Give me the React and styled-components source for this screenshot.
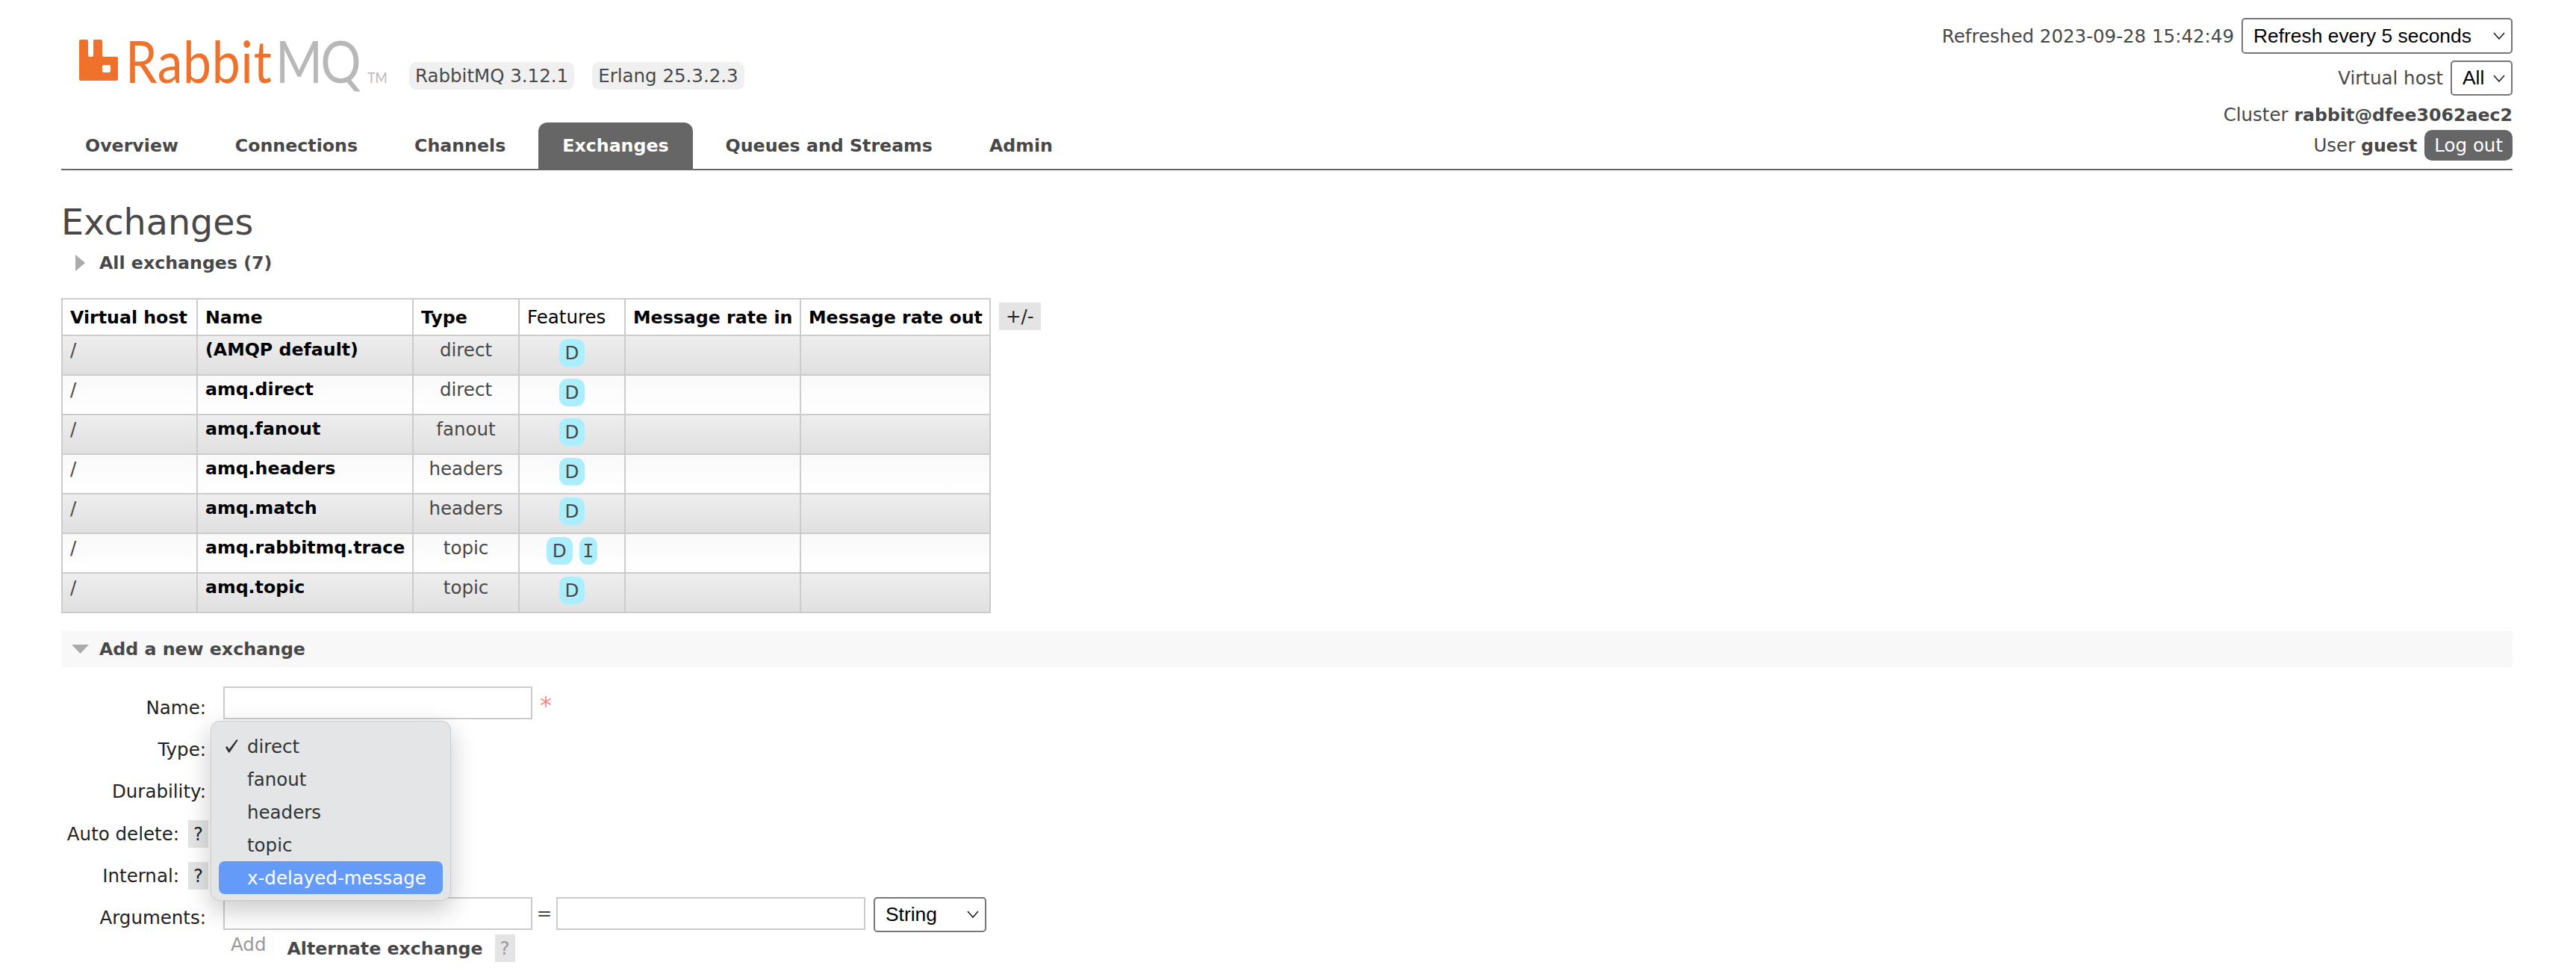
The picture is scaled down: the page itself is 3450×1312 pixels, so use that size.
import React from 'react';
import styled, { createGlobalStyle } from 'styled-components';

const GlobalStyle = createGlobalStyle`
  html, body {
    margin: 0;
    padding: 0;
    background: #fff;
  }
  body {
    font-family: "DejaVu Sans", Verdana, sans-serif;
    font-size: 24.5px;
    color: #484848;
    overflow: hidden;
  }
`;

const Page = styled.div`
  width: 3450px;
  height: 1312px;
  padding: 0 85px 0 82px;
  box-sizing: border-box;
  position: relative;
`;

const Header = styled.header`
  height: 228px;
  border-bottom: 2px solid #666;
  box-sizing: border-box;
  display: flex;
  justify-content: space-between;
`;

const HeaderLeft = styled.div`
  display: flex;
  flex-direction: column;
  justify-content: space-between;
`;

const LogoRow = styled.div`
  display: flex;
  align-items: flex-start;
  padding: 53px 0 0 24px;
`;

const LogoWord = styled.div`
  display: flex;
  align-items: baseline;
  width: 346px;
  height: 56px;
  margin-left: 10px;
  font-family: "Lato", sans-serif;
  font-weight: 400;
  font-size: 78px;
  line-height: 56px;
  white-space: nowrap;
  transform: scaleX(0.87);
  transform-origin: left top;
`;

const Orange = styled.span`
  color: #f0712c;
  letter-spacing: 0.8px;
`;

const Grey = styled.span`
  color: #b8b8b8;
  margin-left: 5px;
  letter-spacing: -3px;
`;

const Trademark = styled.span`
  color: #b8b8b8;
  font-size: 20px;
  margin-left: 13px;
`;

const Versions = styled.div`
  display: flex;
  gap: 24px;
  margin: 30px 0 0 34px;
`;

const VersionBadge = styled.span`
  background: #f0f0f0;
  border-radius: 9px;
  height: 37px;
  line-height: 37px;
  padding: 0 8px;
`;

const Tabs = styled.nav`
  display: flex;
  gap: 12px;
`;

const Tab = styled.a`
  height: 62px;
  line-height: 62px;
  padding: 0 32px;
  font-weight: 700;
  font-size: 23.7px;
  border-radius: 12px 12px 0 0;
  color: ${p => (p.$active ? '#fff' : '#484848')};
  background: ${p => (p.$active ? '#666' : 'transparent')};
`;

const HeaderRight = styled.div`
  display: flex;
  flex-direction: column;
  align-items: flex-end;
  padding-top: 24px;
`;

const MetaRow = styled.div`
  display: flex;
  align-items: center;
  justify-content: flex-end;
  gap: 10px;
  margin-bottom: ${p => p.$mb || 0}px;
`;

const Strong = styled.b`
  font-size: 23.7px;
`;

const NativeSelect = styled.div`
  display: flex;
  align-items: center;
  justify-content: space-between;
  box-sizing: border-box;
  width: ${p => p.$w}px;
  height: ${p => p.$h}px;
  margin-left: ${p => p.$ml || 0}px;
  padding: 0 8px 0 14px;
  border: 2px solid #767676;
  border-radius: 5px;
  background: #fff;
  color: #000;
  font-family: "Liberation Sans", Arial, sans-serif;
  font-size: 26.4px;
`;

const LogoutButton = styled.span`
  background: #666;
  color: #fff;
  border-radius: 10px;
  height: 41px;
  line-height: 41px;
  padding: 0 13px;
`;

const Title = styled.h1`
  margin: 42px 0 7px;
  font-size: 47.6px;
  line-height: 56px;
  font-weight: 400;
  color: #484848;
`;

const SectionHead = styled.div`
  display: flex;
  align-items: center;
  height: ${p => p.$h}px;
  background: ${p => p.$bg || 'transparent'};
  font-weight: 700;
  font-size: 23.7px;
`;

const ArrowBox = styled.span`
  display: flex;
  justify-content: center;
  width: 51px;
  flex: none;
`;

const TableRow = styled.div`
  display: flex;
  align-items: flex-start;
  gap: 11px;
  margin: 28px 0 23px;
`;

const ListTable = styled.table`
  border-collapse: collapse;
  table-layout: fixed;
  width: 1243px;
  border: 2px solid #ccc;
`;

const HeadCell = styled.th`
  height: 49px;
  padding: 0 10px;
  box-sizing: border-box;
  width: ${p => p.$w}px;
  border: 2px solid #ccc;
  text-align: left;
  color: #000;
  background: #fff;
  font-size: ${p => (p.$plain ? 24.5 : 23.7)}px;
  font-weight: ${p => (p.$plain ? 400 : 700)};
  white-space: nowrap;
`;

const BodyRow = styled.tr`
  background: ${p => (p.$alt
    ? 'linear-gradient(#eee, #e0e0e0)'
    : 'linear-gradient(#f9f9f9, #fff)')};
`;

const Cell = styled.td`
  height: 53px;
  padding: 0 10px 15px;
  box-sizing: border-box;
  border: 2px solid #ccc;
  text-align: ${p => p.$align || 'left'};
  font-size: ${p => (p.$bold ? 23.7 : 24.5)}px;
  font-weight: ${p => (p.$bold ? 700 : 400)};
  color: ${p => (p.$bold ? '#000' : '#484848')};
  white-space: nowrap;
`;

const FeatureCell = styled.td`
  height: 53px;
  padding: 0 0 6px;
  box-sizing: border-box;
  border: 2px solid #ccc;
  text-align: center;
`;

const FeatureList = styled.div`
  display: flex;
  justify-content: center;
  gap: 9px;
`;

const Feature = styled.span`
  background: #aaeeff;
  border-radius: 11px;
  height: 37px;
  line-height: 37px;
  padding: 0 ${p => (p.$serif ? 5 : 8)}px;
  font-family: ${p => (p.$serif ? '"DejaVu Sans Mono", monospace' : 'inherit')};
  color: #484848;
`;

const HelpButton = styled.span`
  display: inline-block;
  background: #e4e4e4;
  height: 37px;
  line-height: 37px;
  padding: 0 ${p => p.$pad || 7}px;
  color: ${p => (p.$muted ? '#999' : '#222')};
  flex: none;
`;

const ColumnToggle = styled(HelpButton)`
  margin-top: 6px;
`;

const Form = styled.div`
  position: relative;
  padding-top: 26px;
`;

const FormRow = styled.div`
  display: flex;
  height: 56.4px;
`;

const Label = styled.div`
  box-sizing: border-box;
  width: 197px;
  height: 56px;
  flex: none;
  display: flex;
  justify-content: flex-end;
  align-items: center;
  gap: 12px;
  padding-right: ${p => (p.$help ? 0 : 3)}px;
  color: #222;
`;

const Field = styled.div`
  display: flex;
  align-items: flex-start;
  margin-left: 20px;
  color: #484848;
`;

const TextInput = styled.div`
  box-sizing: border-box;
  width: 414px;
  height: 44px;
  border: 2px solid #ccc;
  background: #fff;
`;

const Required = styled.span`
  color: #f08a8a;
  margin-left: 10px;
  font-size: 32px;
  line-height: 50px;
`;

const Equals = styled.span`
  width: 32px;
  line-height: 44px;
  text-align: center;
`;

const AddRow = styled.div`
  display: flex;
  align-items: center;
  margin: -6px 0 0 227px;
`;

const AddLink = styled.span`
  color: #999;
  margin-right: 28px;
  position: relative;
  top: -5px;
`;

const AlternateLabel = styled.span`
  font-weight: 700;
  font-size: 23.7px;
  color: #484848;
  margin-right: 16px;
`;

const Popup = styled.div`
  position: absolute;
  left: 200px;
  top: 72px;
  width: 322px;
  height: 241px;
  box-sizing: border-box;
  padding: 11px 10px;
  background: #e4e5e7;
  border: 1px solid #ccc;
  border-radius: 12px;
  box-shadow: 0 12px 34px rgba(0, 0, 0, 0.22);
  color: #333;
`;

const PopupItem = styled.div`
  display: flex;
  align-items: center;
  height: 44px;
  padding-left: 8px;
  border-radius: 8px;
  color: ${p => (p.$active ? '#fff' : '#333')};
  background: ${p => (p.$active ? '#659bf8' : 'transparent')};
`;

const CheckSlot = styled.span`
  width: 30px;
  flex: none;
  display: flex;
  align-items: center;
`;

function RabbitIcon() {
  return (
    <svg width="52" height="55" viewBox="0 0 52 55">
      <path
        fillRule="evenodd"
        fill="#f0712c"
        d="M2 0h8a2 2 0 0 1 2 2v19a2 2 0 0 0 2 2h3a2 2 0 0 0 2-2V2a2 2 0 0 1 2-2h8a2 2 0 0 1 2 2v19a2 2 0 0 0 2 2h17a2 2 0 0 1 2 2v28a2 2 0 0 1-2 2H2a2 2 0 0 1-2-2V2a2 2 0 0 1 2-2zM33 34a2 2 0 0 0-2 2v6a2 2 0 0 0 2 2h7a2 2 0 0 0 2-2v-6a2 2 0 0 0-2-2z"
      />
    </svg>
  );
}

function Chevron() {
  return (
    <svg width="16" height="10" viewBox="0 0 16 10">
      <polyline points="1,1 8,9 15,1" fill="none" stroke="#222" strokeWidth="1.6" />
    </svg>
  );
}

function CheckMark() {
  return (
    <svg width="18" height="18" viewBox="0 0 18 18">
      <path d="M1 10.5l2-1.5 3 4L15.5 0.5H18L6.5 17.5H5z" fill="#333" />
    </svg>
  );
}

function Triangle({ dir }) {
  return dir === 'right' ? (
    <svg width="13" height="22" viewBox="0 0 13 22">
      <polygon points="0,0 13,11 0,22" fill="#aaa" />
    </svg>
  ) : (
    <svg width="23" height="12" viewBox="0 0 23 12">
      <polygon points="0,0 23,0 11.5,12" fill="#aaa" />
    </svg>
  );
}

const tabs = ['Overview', 'Connections', 'Channels', 'Exchanges', 'Queues and Streams', 'Admin'];

const columns = [
  { name: 'Virtual host', w: 181 },
  { name: 'Name', w: 289 },
  { name: 'Type', w: 142 },
  { name: 'Features', w: 142, plain: true },
  { name: 'Message rate in', w: 235 },
  { name: 'Message rate out', w: 254 },
];

const exchanges = [
  { name: '(AMQP default)', type: 'direct', features: ['D'] },
  { name: 'amq.direct', type: 'direct', features: ['D'] },
  { name: 'amq.fanout', type: 'fanout', features: ['D'] },
  { name: 'amq.headers', type: 'headers', features: ['D'] },
  { name: 'amq.match', type: 'headers', features: ['D'] },
  { name: 'amq.rabbitmq.trace', type: 'topic', features: ['D', 'I'] },
  { name: 'amq.topic', type: 'topic', features: ['D'] },
];

const exchangeTypes = ['direct', 'fanout', 'headers', 'topic', 'x-delayed-message'];

export default function App() {
  return (
    <Page>
      <GlobalStyle />
      <Header>
        <HeaderLeft>
          <LogoRow>
            <RabbitIcon />
            <LogoWord>
              <Orange>Rabbit</Orange>
              <Grey>MQ</Grey>
              <Trademark>TM</Trademark>
            </LogoWord>
            <Versions>
              <VersionBadge>RabbitMQ 3.12.1</VersionBadge>
              <VersionBadge>Erlang 25.3.2.3</VersionBadge>
            </Versions>
          </LogoRow>
          <Tabs>
            {tabs.map(t => (
              <Tab key={t} $active={t === 'Exchanges'}>{t}</Tab>
            ))}
          </Tabs>
        </HeaderLeft>
        <HeaderRight>
          <MetaRow $mb={9}>
            Refreshed 2023-09-28 15:42:49
            <NativeSelect $w={363} $h={48}>
              Refresh every 5 seconds
              <Chevron />
            </NativeSelect>
          </MetaRow>
          <MetaRow $mb={11}>
            Virtual host
            <NativeSelect $w={83} $h={47}>
              All
              <Chevron />
            </NativeSelect>
          </MetaRow>
          <MetaRow $mb={6}>
            <span>Cluster <Strong>rabbit@dfee3062aec2</Strong></span>
          </MetaRow>
          <MetaRow>
            <span>User <Strong>guest</Strong></span>
            <LogoutButton>Log out</LogoutButton>
          </MetaRow>
        </HeaderRight>
      </Header>

      <Title>Exchanges</Title>
      <SectionHead $h={38}>
        <ArrowBox><Triangle dir="right" /></ArrowBox>
        All exchanges (7)
      </SectionHead>

      <TableRow>
        <ListTable>
          <thead>
            <tr>
              {columns.map(c => (
                <HeadCell key={c.name} $w={c.w} $plain={c.plain}>{c.name}</HeadCell>
              ))}
            </tr>
          </thead>
          <tbody>
            {exchanges.map((x, i) => (
              <BodyRow key={x.name} $alt={i % 2 === 0}>
                <Cell>/</Cell>
                <Cell $bold>{x.name}</Cell>
                <Cell $align="center">{x.type}</Cell>
                <FeatureCell>
                  <FeatureList>
                    {x.features.map(f => (
                      <Feature key={f} $serif={f === 'I'}>{f}</Feature>
                    ))}
                  </FeatureList>
                </FeatureCell>
                <Cell />
                <Cell />
              </BodyRow>
            ))}
          </tbody>
        </ListTable>
        <ColumnToggle $pad={9}>+/-</ColumnToggle>
      </TableRow>

      <SectionHead $h={49} $bg="#f8f8f8">
        <ArrowBox><Triangle dir="down" /></ArrowBox>
        Add a new exchange
      </SectionHead>

      <Form>
        <FormRow>
          <Label>Name:</Label>
          <Field>
            <TextInput />
            <Required>*</Required>
          </Field>
        </FormRow>
        <FormRow><Label>Type:</Label></FormRow>
        <FormRow><Label>Durability:</Label></FormRow>
        <FormRow>
          <Label $help>Auto delete: <HelpButton>?</HelpButton></Label>
        </FormRow>
        <FormRow>
          <Label $help>Internal: <HelpButton>?</HelpButton></Label>
        </FormRow>
        <FormRow>
          <Label>Arguments:</Label>
          <Field>
            <TextInput />
            <Equals>=</Equals>
            <TextInput />
            <NativeSelect $w={151} $h={47} $ml={11}>
              String
              <Chevron />
            </NativeSelect>
          </Field>
        </FormRow>
        <AddRow>
          <AddLink>Add</AddLink>
          <AlternateLabel>Alternate exchange</AlternateLabel>
          <HelpButton $muted>?</HelpButton>
        </AddRow>

        <Popup>
          {exchangeTypes.map(t => (
            <PopupItem key={t} $active={t === 'x-delayed-message'}>
              <CheckSlot>{t === 'direct' && <CheckMark />}</CheckSlot>
              {t}
            </PopupItem>
          ))}
        </Popup>
      </Form>
    </Page>
  );
}
